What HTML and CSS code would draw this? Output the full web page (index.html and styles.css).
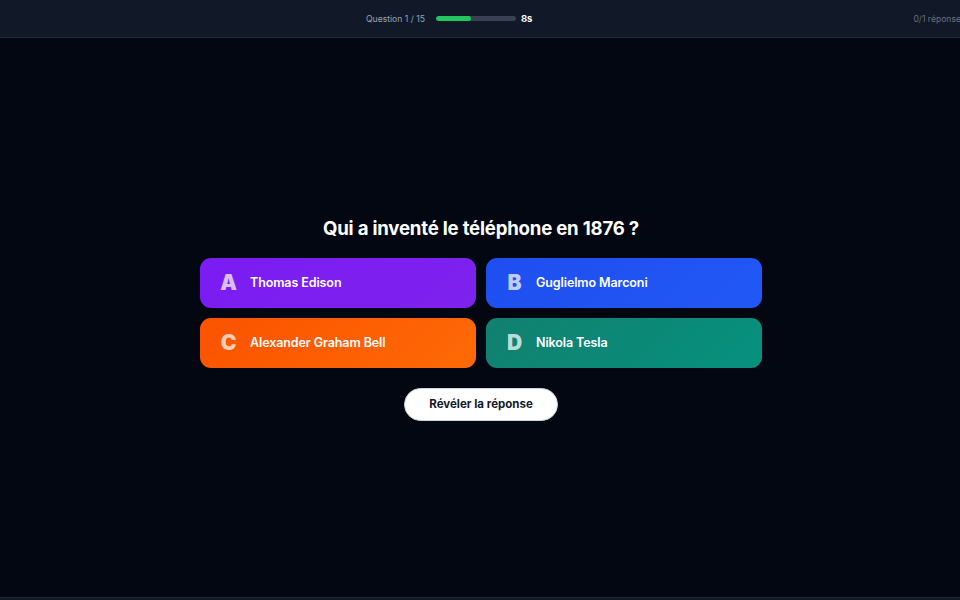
FILE: index.html
```html
<!DOCTYPE html>
<html lang="fr">
<head>
<meta charset="utf-8">
<title>Quiz</title>
<link rel="stylesheet" href="styles.css">
</head>
<body>
<div class="page">
  <header class="topbar">
    <div class="status">
      <span class="qcount">Question 1 / 15</span>
      <div class="progress"><div class="progress-fill" style="width:44%"></div></div>
      <span class="timer">8s</span>
    </div>
    <span class="answers-count">0/1 réponses</span>
  </header>
  <main class="stage">
    <h1 class="question">Qui a inventé le téléphone en 1876 ?</h1>
    <div class="options">
      <div class="option opt-a"><span class="letter">A</span><span class="label">Thomas Edison</span></div>
      <div class="option opt-b"><span class="letter">B</span><span class="label">Guglielmo Marconi</span></div>
      <div class="option opt-c"><span class="letter">C</span><span class="label">Alexander Graham Bell</span></div>
      <div class="option opt-d"><span class="letter">D</span><span class="label">Nikola Tesla</span></div>
    </div>
    <button class="reveal">Révéler la réponse</button>
  </main>
  <footer class="bottombar"></footer>
</div>
</body>
</html>
```
FILE: styles.css
```css
* { box-sizing: border-box; }
html, body { margin: 0; padding: 0; }
body {
  background: #030712;
  font-family: Inter, "Noto Sans", "Liberation Sans", sans-serif;
  color: #fff;
  overflow: hidden;
}
.page {
  height: 100vh;
  display: flex;
  flex-direction: column;
}
.topbar {
  height: 38px;
  flex-shrink: 0;
  background: #111827;
  border-bottom: 1px solid #1f2937;
  display: flex;
  align-items: center;
  padding-left: 366px;
  white-space: nowrap;
  overflow: hidden;
}
.status {
  display: flex;
  align-items: center;
  flex-shrink: 0;
}
.qcount {
  font-size: 8.6px;
  color: #9ca3af;
}
.progress {
  width: 80px;
  height: 5px;
  border-radius: 3px;
  background: #374151;
  margin-left: 11px;
  overflow: hidden;
}
.progress-fill {
  height: 100%;
  background: #22c55e;
  border-radius: 3px;
}
.timer {
  margin-left: 5px;
  font-size: 9.5px;
  font-weight: 700;
  color: #fff;
}
.answers-count {
  margin-left: 381px;
  font-size: 8.6px;
  color: #6b7280;
  flex-shrink: 0;
}
.stage {
  flex: 1;
  display: flex;
  flex-direction: column;
  align-items: center;
  justify-content: center;
  padding-top: 2px;
  padding-left: 2px;
}
.question {
  margin: 0 0 19px;
  font-size: 18.6px;
  font-weight: 700;
  letter-spacing: -0.2px;
  color: #fff;
}
.options {
  display: grid;
  grid-template-columns: 276px 276px;
  gap: 10px;
}
.option {
  height: 50px;
  border-radius: 11px;
  display: flex;
  align-items: center;
  padding-left: 20px;
  gap: 13px;
}
.letter {
  font-size: 21px;
  font-weight: 900;
  color: rgba(255,255,255,0.72);
  width: 17px;
  text-align: center;
}
.label {
  font-size: 12.5px;
  font-weight: 600;
  color: #fff;
  letter-spacing: -0.1px;
}
.opt-a { background: linear-gradient(135deg, #7a1cf2, #7e22ee); }
.opt-b { background: linear-gradient(135deg, #1f4ef0, #2158f5); }
.opt-c { background: linear-gradient(135deg, #fb5200, #fe6a05); }
.opt-d { background: linear-gradient(135deg, #11806f, #07917f); }
.reveal {
  margin-top: 20px;
  width: 154px;
  height: 33px;
  border-radius: 17px;
  background: #fff;
  border: 1px solid #d1d5db;
  color: #111827;
  font-family: inherit;
  font-size: 11.5px;
  font-weight: 700;
  cursor: pointer;
}
.bottombar {
  height: 3px;
  flex-shrink: 0;
  background: #111827;
  border-top: 1px solid #1f2937;
}
```
